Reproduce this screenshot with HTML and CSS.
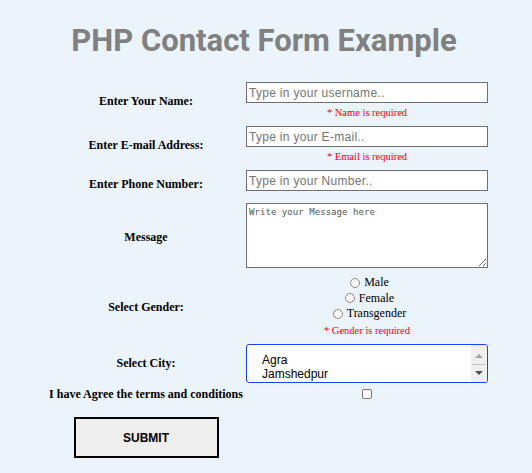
FILE: index.html
```html
<!DOCTYPE html>
<html lang="en">
<head>
<meta charset="utf-8">
<title>PHP Contact Form Example</title>
<link rel="stylesheet" href="styles.css">
</head>
<body>
<h1 class="title">PHP Contact Form Example</h1>
<form class="form">
  <div class="row">
    <label class="label" for="name">Enter Your Name:</label>
    <div class="cell">
      <input class="text-input" id="name" type="text" placeholder="Type in your username..">
      <div class="error">* Name is required</div>
    </div>
  </div>
  <div class="row">
    <label class="label" for="email">Enter E-mail Address:</label>
    <div class="cell">
      <input class="text-input" id="email" type="text" placeholder="Type in your E-mail..">
      <div class="error">* Email is required</div>
    </div>
  </div>
  <div class="row">
    <label class="label" for="phone">Enter Phone Number:</label>
    <div class="cell cell-phone">
      <input class="text-input" id="phone" type="text" placeholder="Type in your Number..">
    </div>
  </div>
  <div class="row">
    <label class="label" for="msg">Message</label>
    <div class="cell cell-message">
      <textarea class="message" id="msg" placeholder="Write your Message here"></textarea>
    </div>
  </div>
  <div class="row">
    <span class="label">Select Gender:</span>
    <div class="cell cell-gender">
      <label class="radio-line"><input class="radio" type="radio" name="gender">Male</label>
      <label class="radio-line"><input class="radio" type="radio" name="gender">Female</label>
      <label class="radio-line"><input class="radio" type="radio" name="gender">Transgender</label>
      <div class="error error-gender">* Gender is required</div>
    </div>
  </div>
  <div class="row">
    <span class="label">Select City:</span>
    <div class="cell cell-city">
      <div class="listbox" role="listbox">
        <div class="options">
          <div class="option" role="option">Agra</div>
          <div class="option" role="option">Jamshedpur</div>
        </div>
        <div class="scrollbar">
          <span class="arrow-up"></span>
          <span class="thumb"></span>
          <span class="arrow-down"></span>
        </div>
      </div>
    </div>
  </div>
  <div class="row row-terms">
    <label class="label" for="terms">I have Agree the terms and conditions</label>
    <div class="cell cell-terms">
      <input class="checkbox" id="terms" type="checkbox">
    </div>
  </div>
  <div class="row row-submit">
    <button class="submit" type="button">SUBMIT</button>
  </div>
</form>
</body>
</html>
```
FILE: styles.css
```css
html, body {
  margin: 0;
  background: #ebf3fb;
}
body {
  font-family: "Liberation Serif", "Times New Roman", serif;
  color: #000;
}
.title {
  margin: 23px 4px 22px 0;
  font: bold 31px/36px Roboto, "Liberation Sans", sans-serif;
  color: #808080;
  text-align: center;
}
.form {
  margin-left: 48px;
  width: 440px;
  display: flex;
  flex-direction: column;
}
.row {
  display: grid;
  grid-template-columns: 196px 242px;
  column-gap: 2px;
  align-items: center;
  margin-top: 4px;
}
.row:first-child {
  margin-top: 0;
}
.label {
  font-weight: bold;
  font-size: 12px;
  text-align: center;
}
.cell {
  padding: 1px 0;
  display: flex;
  flex-direction: column;
  align-items: center;
}
.text-input {
  box-sizing: border-box;
  width: 242px;
  height: 21px;
  margin: 0;
  padding: 0 2px;
  border: 1px solid #707070;
  background: #fff;
  font: 12px "Liberation Sans", Arial, sans-serif;
  letter-spacing: 0.3px;
  outline: none;
}
.text-input::placeholder {
  color: #757575;
}
.error {
  margin-top: 3px;
  line-height: 14px;
  font-size: 10.5px;
  color: #ff0000;
}
.cell-phone {
  padding-bottom: 8px;
}
.cell-message {
  padding: 0 0 3px;
}
.message {
  display: block;
  box-sizing: border-box;
  width: 242px;
  height: 65px;
  margin: 0;
  padding: 2px;
  border: 1px solid #707070;
  background: #fff;
  font: 9.1px/12px "DejaVu Sans Mono", "Liberation Mono", monospace;
  outline: none;
}
.message::placeholder {
  color: #555555;
}
.cell-gender {
  padding: 0 0 2px;
}
.radio-line {
  height: 15.5px;
  display: flex;
  align-items: center;
  justify-content: center;
  font-size: 12px;
}
.radio {
  appearance: none;
  -webkit-appearance: none;
  box-sizing: border-box;
  width: 10px;
  height: 10px;
  margin: 0 4px 0 5px;
  border: 1px solid #8a8a8a;
  border-radius: 50%;
  background: #fff;
}
.error-gender {
  margin-top: 2px;
}
.cell-city {
  padding: 0 0 1px;
}
.listbox {
  box-sizing: border-box;
  width: 242px;
  height: 39px;
  display: flex;
  border: 1px solid #1d3ff5;
  border-radius: 3px;
  background: #fff;
  overflow: hidden;
  font: 12px/14px "Liberation Sans", Arial, sans-serif;
}
.options {
  flex: 1;
  padding: 8px 0 0 15px;
}
.scrollbar {
  width: 16px;
  background: #f0f0f0;
  display: flex;
  flex-direction: column;
  align-items: center;
  padding-top: 9px;
  box-sizing: border-box;
}
.arrow-up {
  width: 0;
  height: 0;
  border-left: 4px solid transparent;
  border-right: 4px solid transparent;
  border-bottom: 4px solid #a3a3a3;
}
.thumb {
  width: 14px;
  height: 1px;
  margin-top: 6px;
  background: #c4c4c4;
}
.arrow-down {
  width: 0;
  height: 0;
  margin-top: 6px;
  border-left: 4px solid transparent;
  border-right: 4px solid transparent;
  border-top: 4px solid #505050;
}
.row-terms {
  margin-top: 3px;
}
.cell-terms {
  padding: 0;
  height: 14px;
  justify-content: center;
}
.checkbox {
  appearance: none;
  -webkit-appearance: none;
  box-sizing: border-box;
  width: 10px;
  height: 10px;
  margin: 0;
  border: 1px solid #767676;
  border-radius: 2px;
  background: #fff;
}
.row-submit {
  margin-top: 15.5px;
}
.submit {
  justify-self: center;
  box-sizing: border-box;
  width: 145px;
  height: 41px;
  margin: 0;
  border: 2px solid #000;
  background: #efefef;
  font: bold 12px "Liberation Sans", Arial, sans-serif;
  color: #000;
}
```
